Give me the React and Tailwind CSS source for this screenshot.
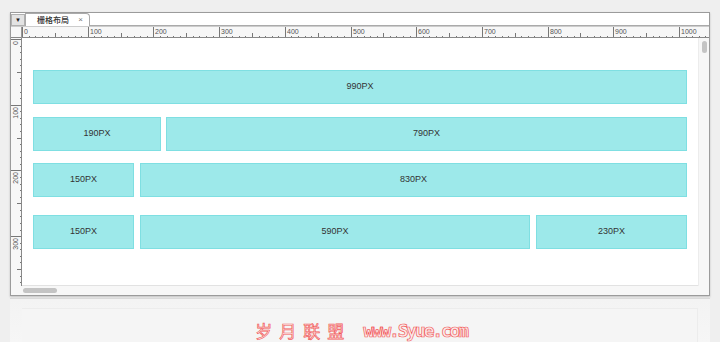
import React from 'react'

// ruler scale: 100 units = 65.7px
const S = 0.657

function TopRuler() {
  const ticks = Array.from({ length: 106 }, (_, i) => i * 10)
  return (
    <svg width="698" height="11" className="block">
      <rect width="698" height="11" fill="#f7f7f7" />
      {ticks.map((u) => {
        const x = 11.5 + Math.round(u * S)
        const major = u % 100 === 0
        const half = u % 50 === 0
        const h = major ? 11 : half ? 5 : 2
        return <line key={u} x1={x} x2={x} y1={11 - h} y2={11} stroke="#777" strokeWidth="1" />
      })}
      {ticks.filter((u) => u % 100 === 0).map((u) => (
        <text key={'t' + u} x={13 + Math.round(u * S)} y={6.5} fontSize="7" fill="#555" fontFamily="Liberation Sans, Arial, sans-serif">
          {u}
        </text>
      ))}
      <line x1="0" x2="698" y1="10.5" y2="10.5" stroke="#888" />
      <line x1="10.5" x2="10.5" y1="0" y2="11" stroke="#999" />
    </svg>
  )
}

function LeftRuler() {
  const ticks = Array.from({ length: 39 }, (_, i) => i * 10)
  return (
    <svg width="11" height="248" className="block">
      <rect width="11" height="248" fill="#f7f7f7" />
      {ticks.map((u) => {
        const y = 1.5 + Math.round(u * S)
        const major = u % 100 === 0
        const half = u % 50 === 0
        const w = major ? 11 : half ? 5 : 2
        return <line key={u} x1={11 - w} x2={11} y1={y} y2={y} stroke="#777" strokeWidth="1" />
      })}
      {ticks.filter((u) => u % 100 === 0).map((u) => {
        const y = 3 + Math.round(u * S)
        return (
          <text
            key={'t' + u}
            x={0}
            y={0}
            transform={`translate(6.5 ${y}) rotate(-90)`}
            textAnchor="end"
            fontSize="7"
            fill="#555"
            fontFamily="Liberation Sans, Arial, sans-serif"
          >
            {u}
          </text>
        )
      })}
      <line x1="10.5" x2="10.5" y1="0" y2="248" stroke="#888" />
    </svg>
  )
}

function Box({ w, label, grow }) {
  return (
    <div
      className={`h-[34px] bg-[#9de9ea] border border-[#7fdfe2] flex items-center justify-center text-[9px] text-[#333] ${grow ? 'flex-1' : ''}`}
      style={grow ? undefined : { width: w }}
    >
      {label}
    </div>
  )
}

export default function App() {
  return (
    <div className="w-[720px] h-[342px] bg-[#efefef] overflow-hidden relative font-['Liberation_Sans',Arial,sans-serif]">
      <div className="pt-[12px] px-[10px]">
        {/* editor window */}
        <div className="w-[700px] h-[284px] border border-[#9b9b9b] bg-white flex flex-col shadow-[0_1px_2px_rgba(0,0,0,0.2)]">
          {/* tab bar */}
          <div className="h-[13px] flex items-end bg-white">
            <div className="w-[14px] h-[12px] bg-[#e3e3e3] border border-[#b0b0b0] flex items-center justify-center text-[6px] text-[#222]">
              ▼
            </div>
            <div className="w-[65px] h-[13px] border border-b-0 border-[#aaa] rounded-tr-[4px] bg-white flex items-center pl-[11px] pr-[6px] justify-between">
              <span className="text-[8px] font-medium text-[#333] font-['Noto_Sans_CJK_SC',sans-serif] leading-none">栅格布局</span>
              <span className="text-[8px] text-[#777] leading-none">×</span>
            </div>
            <div className="flex-1 border-b border-[#aaa]" />
          </div>

          {/* top ruler */}
          <div className="h-[11px] border-t border-[#ccc] box-content">
            <TopRuler />
          </div>

          {/* body */}
          <div className="h-[248px] flex">
            <LeftRuler />
            <div className="flex-1 bg-white border-b border-[#e2e2e2] pt-[32px] pl-[11px] pr-[11px] flex flex-col">
              <div className="flex">
                <Box label="990PX" grow />
              </div>
              <div className="flex gap-[5px] mt-[13px]">
                <Box w={128} label="190PX" />
                <Box label="790PX" grow />
              </div>
              <div className="flex gap-[6px] mt-[12px]">
                <Box w={101} label="150PX" />
                <Box label="830PX" grow />
              </div>
              <div className="flex gap-[6px] mt-[18px]">
                <Box w={101} label="150PX" />
                <Box w={390} label="590PX" />
                <Box label="230PX" grow />
              </div>
            </div>
            {/* vertical scrollbar */}
            <div className="w-[11px] bg-[#f7f7f7] border-l border-[#ececec] flex justify-center pt-[3px]">
              <div className="w-[5px] h-[12px] rounded-full bg-[#c4c4c4]" />
            </div>
          </div>

          {/* horizontal scrollbar */}
          <div className="flex-1 bg-[#f7f7f7] pl-[12px] flex items-center">
            <div className="w-[34px] h-[5px] rounded-full bg-[#c4c4c4]" />
          </div>
        </div>
      </div>

      {/* reflection */}
      <div className="mx-[10px] mt-[2px] h-[44px] border-t border-[#dadada] bg-gradient-to-b from-[#f3f3f3] to-[#f6f6f6] flex flex-col">
        <div className="mx-[12px] mt-[9px] flex-1 border-t border-r border-[#ececec] bg-[#f5f5f5]" />
      </div>

      {/* watermark */}
      <div className="absolute left-0 right-0 top-[320px] h-[21px] pl-[2px] flex justify-center items-center gap-[12px] leading-none text-[#fbeaea] [-webkit-text-stroke:0.7px_#f25a5a]">
        <span className="text-[17px] leading-[20px] tracking-[7px] font-['Noto_Sans_CJK_SC',sans-serif]">岁月联盟</span>
        <span className="text-[18px] leading-[20px] font-bold font-['DejaVu_Sans_Mono',monospace] tracking-[-2.2px]">www.Syue.com</span>
      </div>
    </div>
  )
}
